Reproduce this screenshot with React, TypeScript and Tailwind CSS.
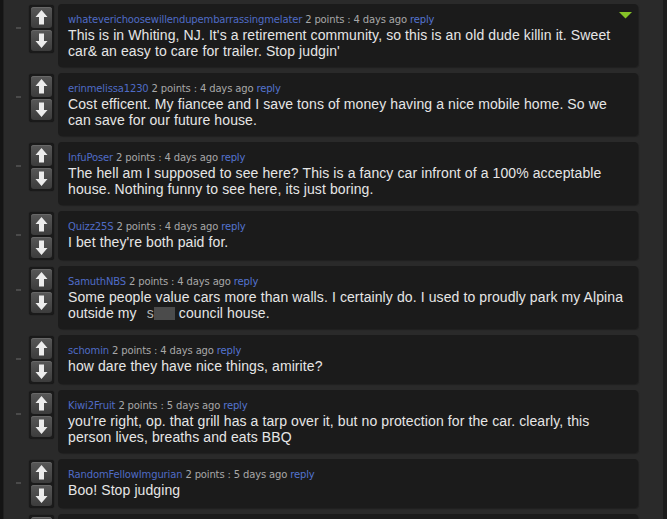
import React from "react";

type C = { user: string; pts: string; ago: string; body: React.ReactNode; flag?: boolean };

const comments: C[] = [
  {
    user: "whateverichoosewillendupembarrassingmelater",
    pts: "2 points",
    ago: "4 days ago",
    body: "This is in Whiting, NJ. It's a retirement community, so this is an old dude killin it. Sweet car& an easy to care for trailer. Stop judgin'",
    flag: true,
  },
  {
    user: "erinmelissa1230",
    pts: "2 points",
    ago: "4 days ago",
    body: "Cost efficent. My fiancee and I save tons of money having a nice mobile home. So we can save for our future house.",
  },
  {
    user: "InfuPoser",
    pts: "2 points",
    ago: "4 days ago",
    body: "The hell am I supposed to see here? This is a fancy car infront of a 100% acceptable house. Nothing funny to see here, its just boring.",
  },
  { user: "Quizz25S", pts: "2 points", ago: "4 days ago", body: "I bet they're both paid for." },
  {
    user: "SamuthNBS",
    pts: "2 points",
    ago: "4 days ago",
    body: (
      <>
        Some people value cars more than walls. I certainly do. I used to proudly park my Alpina outside my{" "}
        <span className="pl-[6px] text-[#b5b5b5]">s</span>
        <span className="inline-block w-[21px] h-[13px] bg-[#4b4b4b] align-[-2px]" /> council house.
      </>
    ),
  },
  { user: "schomin", pts: "2 points", ago: "4 days ago", body: "how dare they have nice things, amirite?" },
  {
    user: "Kiwi2Fruit",
    pts: "2 points",
    ago: "5 days ago",
    body: "you're right, op. that grill has a tarp over it, but no protection for the car. clearly, this person lives, breaths and eats BBQ",
  },
  { user: "RandomFellowImgurian", pts: "2 points", ago: "5 days ago", body: "Boo! Stop judging" },
  { user: "", pts: "", ago: "", body: "" },
];

function Arrow({ down }: { down?: boolean }) {
  return (
    <svg width="21" height="21" viewBox="0 0 21 21" className={down ? "rotate-180" : ""}>
      <polygon points="10.5,3 16.5,10 13,10 13,17.5 8,17.5 8,10 4.5,10" fill="#ececec" />
    </svg>
  );
}

function VoteBtn({ down }: { down?: boolean }) {
  return (
    <div className="w-[21px] h-[21px] rounded-[3px] bg-gradient-to-b from-[#585858] to-[#3c3c3c] shadow-[inset_0_1px_0_#686868] flex items-center justify-center">
      <Arrow down={down} />
    </div>
  );
}

function Row({ c }: { c: C }) {
  return (
    <div className="flex items-start">
      <div className="w-[25px] h-[48px] flex items-center">
        <div className="ml-[12px] w-[5px] h-[2px] bg-[#4a4a4a]" />
      </div>
      <div className="mt-[1px] w-[25px] p-[2px] flex flex-col gap-[2px] rounded-[3px] bg-[#1a1a1a] shadow-[0_0_1px_#0e0e0e]">
        <VoteBtn />
        <VoteBtn down />
      </div>
      <div className="relative ml-[4px] w-[580px] min-h-[49px] rounded-[4px] bg-[#1b1b1b] pt-[9px] pb-[8px] pl-[10px] pr-[12px] shadow-[1px_1px_1px_#202020]">
        {c.user && (
          <>
            <div
              className="h-[14px] leading-[14px] text-[10px] tracking-[-0.15px] text-[#a8a8a8]"
              style={{ fontFamily: '"DejaVu Sans", Verdana, sans-serif' }}
            >
              <span className="text-[#4f6bc6]">{c.user}</span> {c.pts} : {c.ago}{" "}
              <span className="text-[#5474d0]">reply</span>
            </div>
            <div
              className="text-[14px] leading-[16px] tracking-[0.1px] text-[#e6e6e6]"
              style={{ fontFamily: '"Liberation Sans", Arial, sans-serif' }}
            >
              {c.body}
            </div>
          </>
        )}
        {c.flag && (
          <svg className="absolute right-[6px] top-[8px]" width="13" height="7" viewBox="0 0 13 7">
            <polygon points="0,0 13,0 6.5,6.5" fill="#86c327" />
          </svg>
        )}
      </div>
    </div>
  );
}

export default function App() {
  return (
    <div className="w-[667px] h-[519px] overflow-hidden bg-[#2a2a2a] flex">
      <div className="w-[3px] h-full bg-[#141414]" />
      <div className="w-[1px] h-full bg-[#202020]" />
      <div className="flex-1 pt-[4px] flex flex-col gap-[6px]">
        {comments.map((c, i) => (
          <Row key={i} c={c} />
        ))}
      </div>
      <div className="w-[4px] h-full bg-[#1c1c1c]" />
    </div>
  );
}
